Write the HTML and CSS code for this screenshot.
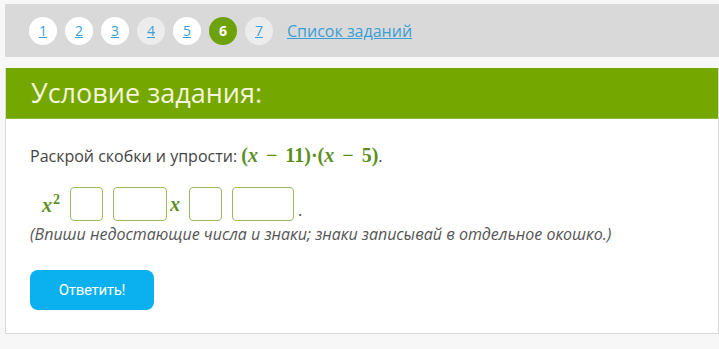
FILE: index.html
```html
<!DOCTYPE html>
<html lang="ru">
<head>
    <meta charset="UTF-8">
    <title>Условие задания</title>
    <link rel="stylesheet" href="styles.css">
</head>
<body>
    <div class="tasks">
        <a class="num" href="#">1</a>
        <a class="num" href="#">2</a>
        <a class="num" href="#">3</a>
        <a class="num grey" href="#">4</a>
        <a class="num" href="#">5</a>
        <span class="num current">6</span>
        <a class="num grey" href="#">7</a>
        <a class="list" href="#">Список заданий</a>
    </div>

    <div class="card">
        <h2 class="card-title">Условие задания:</h2>
        <div class="card-body">
            <p class="question">Раскрой скобки и упрости: <span class="math">(<i>x</i> − 11)·(<i>x</i> − 5)</span>.</p>

            <div class="answer">
                <span class="math var"><i>x</i><sup>2</sup></span>
                <input class="box small" type="text">
                <input class="box" type="text">
                <span class="math var mid"><i>x</i></span>
                <input class="box small" type="text">
                <input class="box wide" type="text">
                <span class="dot">.</span>
            </div>
            <p class="hint">(Впиши недостающие числа и знаки; знаки записывай в отдельное окошко.)</p>

            <button type="button">Ответить!</button>
        </div>
    </div>
</body>
</html>
```

FILE: styles.css
```css
body {
    margin: 0;
    padding: 4px 0 0 5px;
    background: #f7f7f7;
    font-family: "Open Sans", "Noto Sans", sans-serif;
    color: #444;
}
.tasks {
    display: flex;
    align-items: center;
    gap: 8px;
    height: 53px;
    padding-left: 24px;
    background: #d9d9d9;
}
.num {
    display: flex;
    align-items: center;
    justify-content: center;
    width: 28px;
    height: 28px;
    border-radius: 50%;
    background: #fff;
    color: #3a9fd6;
    font-size: 14px;
}
.num.grey {
    background: #ececec;
}
.num.current {
    background: #6ea20a;
    color: #fff;
    font-weight: bold;
}
.list {
    margin-left: 6px;
    color: #3a9fd6;
    font-size: 16px;
}
.card {
    margin-top: 11px;
    background: #fff;
    border: 1px solid #d8d8d8;
    border-top: none;
    height: 265px;
}
.card-title {
    margin: 0;
    height: 50px;
    line-height: 50px;
    padding-left: 25px;
    background: #74a800;
    border-bottom: 1px solid #8cb83a;
    color: #f4f5dc;
    font-weight: normal;
    font-size: 27px;
}
.card-body {
    padding: 25px 24px;
}
.question {
    margin: 0;
    font-size: 16px;
    color: #444;
}
.math {
    font-family: "Liberation Serif", "DejaVu Serif", serif;
    color: #5d8f1f;
    font-size: 20px;
    font-weight: bold;
    word-spacing: 3px;
}
.math i {
    font-weight: bold;
}
.answer {
    display: flex;
    align-items: center;
    gap: 10px;
    margin-top: 20px;
    padding-left: 12px;
}
.var {
    font-size: 20px;
}
.var sup {
    font-size: 14px;
    margin-left: 1px;
}
.answer .mid {
    margin-left: -7px;
    margin-right: -1px;
}
.box {
    width: 54px;
    height: 34px;
    box-sizing: border-box;
    border: 1px solid #9abb5e;
    border-radius: 4px;
    background: #fff;
}
.box.small {
    width: 33px;
}
.box.wide {
    width: 62px;
}
.dot {
    margin-left: -6px;
    padding-top: 12px;
    color: #444;
}
.hint {
    margin: 2px 0 0;
    font-size: 16px;
    font-style: italic;
    color: #555;
}
button {
    margin-top: 25px;
    width: 124px;
    height: 40px;
    border: none;
    border-radius: 8px;
    background: #0bb0ee;
    color: #fff;
    font-family: "Roboto", sans-serif;
    font-size: 15px;
    letter-spacing: -0.3px;
    cursor: pointer;
}
```
